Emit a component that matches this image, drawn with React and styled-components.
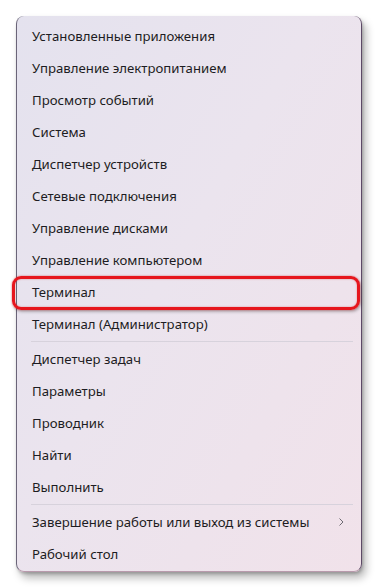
import React from 'react'
import styled, { createGlobalStyle } from 'styled-components'

const GlobalStyle = createGlobalStyle`
    html, body {
        margin:0;
        padding:0;
        background:#ffffff;
    }
    body {
        font-family: "Noto Sans", "Open Sans", "Liberation Sans", sans-serif;
    }
`

const Page = styled.div`
    width:378px;
    height:588px;
    padding:16px 0 0 16px;
    box-sizing: border-box;
    background:#ffffff;
`
const Menu = styled.div`
    width:346px;
    height:556px;
    box-sizing: border-box;
    padding:4px 0 2px 0;
    border-radius:8px;
    border-left:1px solid #6a6478;
    border-right:1px solid #5c4a66;
    border-bottom:1px solid #b89aac;
    background: linear-gradient(120deg, #e4e2ee 0%, #ebe4ee 45%, #f1e2ea 100%);
    box-shadow: 4px 6px 8px rgba(0,0,0,0.28), 1px 2px 3px rgba(0,0,0,0.2);
    display:flex;
    flex-direction: column;
`
const Item = styled.div`
    position:relative;
    height:32px;
    flex-shrink:0;
    display:flex;
    align-items:center;
    justify-content: space-between;
    margin:0 4px;
    padding:0 10px 0 11px;
    box-sizing: border-box;
    border-radius:6px;

    ${p => p.$active && `
    &::after{
        content:'';
        position:absolute;
        left:-9px;
        right:-3px;
        top:0px;
        bottom:-2px;
        border:3.5px solid #e6161d;
        border-radius:9px;
        box-shadow: 0 0 2px rgba(210,0,0,0.55), 1px 2px 3px rgba(0,0,0,0.25), inset 0 0 2px rgba(200,0,0,0.4);
        pointer-events:none;
    }
    `}
`
const Label = styled.span`
    font-size:13.2px;
    color:#1d1c22;
    white-space: nowrap;
`
const Separator = styled.div`
    height:1px;
    flex-shrink:0;
    margin:1px 8px 1px 14px;
    background:#d7d2dc;
`
const Chevron = styled.svg`
    width:10px;
    height:10px;
    margin-right:1px;
`

const groups = [
    [
        'Установленные приложения',
        'Управление электропитанием',
        'Просмотр событий',
        'Система',
        'Диспетчер устройств',
        'Сетевые подключения',
        'Управление дисками',
        'Управление компьютером',
        'Терминал',
        'Терминал (Администратор)'
    ],
    [
        'Диспетчер задач',
        'Параметры',
        'Проводник',
        'Найти',
        'Выполнить'
    ],
    [
        'Завершение работы или выход из системы',
        'Рабочий стол'
    ]
]

function App() {
  return (
    <>
    <GlobalStyle />
    <Page>
        <Menu>
            {groups.map((group, gi) => (
                <React.Fragment key={gi}>
                    {gi > 0 && <Separator />}
                    {group.map(label => (
                        <Item key={label} $active={label === 'Терминал'}>
                            <Label>{label}</Label>
                            {label.startsWith('Завершение') &&
                            <Chevron viewBox="0 0 10 10">
                                <path d="M3.5 1.5 L7 5 L3.5 8.5" fill="none" stroke="#6d6a72" strokeWidth="1" />
                            </Chevron>
                            }
                        </Item>
                    ))}
                </React.Fragment>
            ))}
        </Menu>
    </Page>
    </>
  )
}

export default App
